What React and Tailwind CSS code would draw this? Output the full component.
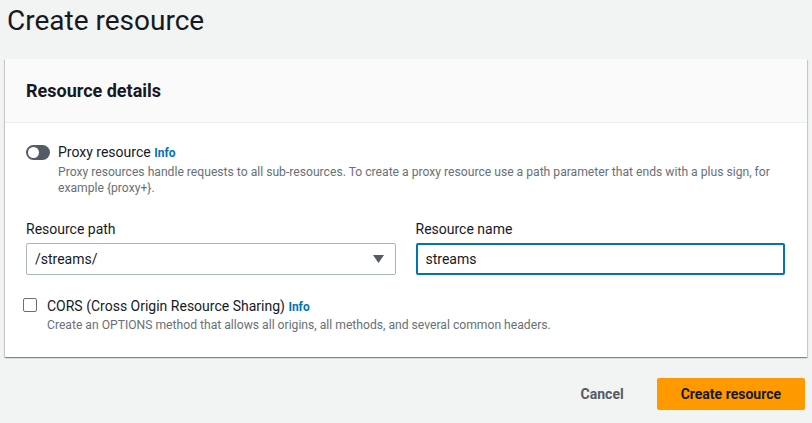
import { useState } from "react";

const proxyHelp =
  "Proxy resources handle requests to all sub-resources. To create a proxy resource use a path parameter that ends with a plus sign, for example {proxy+}.";

export default function App() {
  const [name, setName] = useState("streams");

  return (
    <div
      className="w-[812px] h-[423px] overflow-hidden bg-[#f2f3f3] text-[#16191f]"
      style={{ fontFamily: "Roboto, 'Noto Sans', sans-serif" }}
    >
      <h1 className="pl-[7px] pt-[3px] text-[28px] leading-[36px] font-normal">Create resource</h1>

      <div className="ml-[5px] mr-[5px] mt-[20px] bg-white shadow-[0_1px_1px_0_rgba(0,28,36,0.3),1px_1px_1px_0_rgba(0,28,36,0.15),-1px_1px_1px_0_rgba(0,28,36,0.15)]">
        <div className="h-[64px] bg-[#fafafa] border-b border-[#eaeded] flex items-center px-[21px]">
          <h2 className="text-[18px] font-bold leading-[22px]">Resource details</h2>
        </div>

        <div className="px-[21px] pt-[19px] pb-[24px]">
          <div className="flex gap-[8px]">
            <div className="mt-[3px] w-[24px] h-[15px] rounded-full bg-[#545b64] relative shrink-0">
              <span className="absolute left-[2px] top-[2px] w-[11px] h-[11px] rounded-full bg-white" />
            </div>
            <div>
              <div className="text-[14px] leading-[20px]">
                Proxy resource <span className="text-[12px] font-bold text-[#0073bb]">Info</span>
              </div>
              <p className="text-[12.15px] leading-[16px] text-[#687078] mt-[1px]">{proxyHelp}</p>
            </div>
          </div>

          <div className="grid grid-cols-2 gap-[20px] mt-[23px] pr-[1px]">
            <div>
              <label className="block text-[14px] leading-[20px] mb-[4px]">Resource path</label>
              <div className="h-[32px] border border-[#aab7b8] rounded-[2px] flex items-center justify-between pl-[8px] pr-[11px]">
                <span className="text-[14px]">/streams/</span>
                <svg width="11" height="8" viewBox="0 0 11 8">
                  <path d="M0 0h11L5.5 8z" fill="#545b64" />
                </svg>
              </div>
            </div>
            <div>
              <label className="block text-[14px] leading-[20px] mb-[4px]">Resource name</label>
              <input
                value={name}
                onChange={(e) => setName(e.target.value)}
                className="w-full h-[32px] border-2 border-[#0073bb] rounded-[2px] px-[8px] text-[14px] outline-none"
              />
            </div>
          </div>

          <div className="flex gap-[10px] mt-[21px]">
            <div className="mt-[2px] ml-[-3px] w-[14px] h-[14px] border border-[#687078] rounded-[2px] bg-white shrink-0" />
            <div>
              <div className="text-[14px] leading-[20px]">
                CORS (Cross Origin Resource Sharing) <span className="text-[12px] font-bold text-[#0073bb]">Info</span>
              </div>
              <p className="text-[12.15px] leading-[16px] text-[#687078]">
                Create an OPTIONS method that allows all origins, all methods, and several common headers.
              </p>
            </div>
          </div>
        </div>
      </div>

      <div className="flex justify-end items-center gap-[13px] mt-[21px] pr-[7px]">
        <button className="h-[32px] px-[20px] text-[14px] font-bold text-[#545b64]">Cancel</button>
        <button className="h-[32px] px-[24px] rounded-[2px] bg-[#ff9900] text-[14px] font-bold text-[#16191f]">Create resource</button>
      </div>
    </div>
  );
}
